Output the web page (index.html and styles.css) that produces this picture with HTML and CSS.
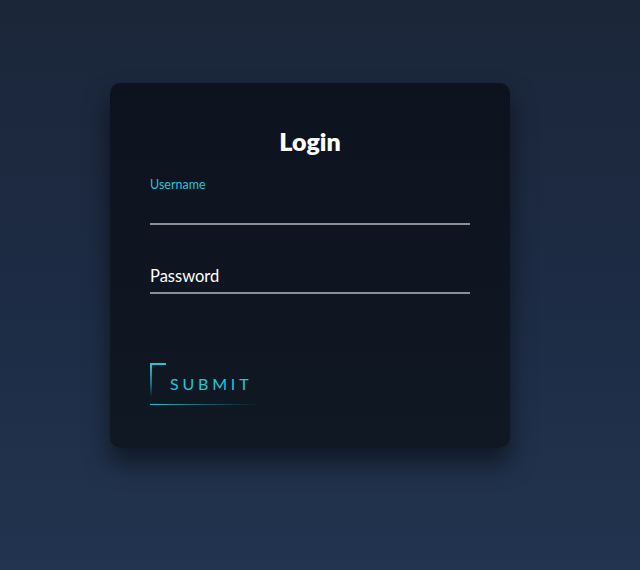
FILE: index.html
```html
<!DOCTYPE html>
<html>
<head>
<meta charset="utf-8">
<link rel="stylesheet" href="styles.css">
</head>
<body>
<div class="page">
  <form class="card">
    <h2 class="title">Login</h2>
    <div class="field">
      <label class="float">Username</label>
      <div class="line"></div>
    </div>
    <div class="field field-pw">
      <div class="placeholder">Password</div>
      <div class="line"></div>
    </div>
    <div class="submit">
      <span class="corner"></span>
      <span class="submit-text">SUBMIT</span>
      <span class="underline"></span>
    </div>
  </form>
</div>
</body>
</html>
```
FILE: styles.css
```css
html, body {
  margin: 0;
  height: 100%;
}
body {
  background: linear-gradient(180deg, #1b2639 0%, #1d2b44 50%, #22344f 100%);
  font-family: "Lato", "Open Sans", sans-serif;
}
.page {
  display: flex;
  justify-content: center;
  padding-top: 83px;
  padding-right: 20px;
}
.card {
  width: 400px;
  height: 365px;
  box-sizing: border-box;
  padding: 40px;
  background: linear-gradient(180deg, #0d131e, #101823);
  border-radius: 10px;
  box-shadow: 0 15px 25px rgba(0, 0, 0, 0.5);
  display: flex;
  flex-direction: column;
}
.title {
  margin: 0;
  text-align: center;
  color: #ffffff;
  font-family: "Lato", "Open Sans", sans-serif;
  font-weight: 800;
  font-size: 25px;
  line-height: 36px;
}
.field {
  margin-top: 18px;
  position: relative;
}
.float {
  display: block;
  color: #1fc6d6;
  font-size: 12.5px;
  line-height: 16px;
}
.field .line {
  height: 2px;
  background: #8b9097;
  margin-top: 30px;
}
.field-pw {
  margin-top: 40px;
}
.placeholder {
  color: #ffffff;
  font-size: 16.5px;
  line-height: 22px;
  padding-bottom: 5px;
}
.field-pw .line {
  margin-top: 0;
}
.submit {
  position: relative;
  margin-top: 69px;
  width: 120px;
  height: 42px;
}
.corner {
  position: absolute;
  left: 0;
  top: 0;
  width: 16px;
  height: 34px;
  border-top: 2px solid #1ec8d8;
  background: linear-gradient(180deg, #1ec8d8, rgba(30, 200, 216, 0.5) 60%, rgba(30, 200, 216, 0)) left top / 2px 100% no-repeat;
  box-sizing: border-box;
}
.submit-text {
  position: absolute;
  left: 20px;
  top: 10px;
  color: #1ec8d8;
  font-size: 16px;
  letter-spacing: 3.8px;
  line-height: 22px;
}
.underline {
  position: absolute;
  left: 0;
  top: 41px;
  width: 110px;
  height: 1px;
  background: linear-gradient(90deg, #1ec8d8, rgba(30, 200, 216, 0.4) 50%, rgba(30, 200, 216, 0));
}
```
